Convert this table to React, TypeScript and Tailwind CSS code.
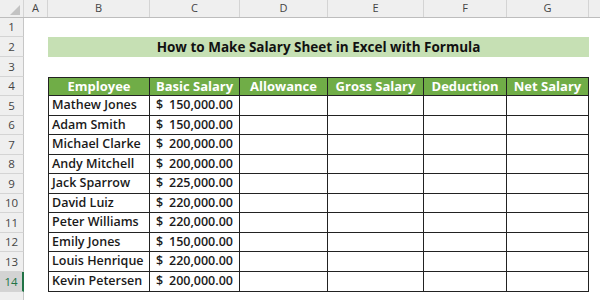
import React from "react";

type Person = {
  name: string;
  salary: string;
};

const people: Array<Person> = [
  { name: "Mathew Jones", salary: "150,000.00" },
  { name: "Adam Smith", salary: "150,000.00" },
  { name: "Michael Clarke", salary: "200,000.00" },
  { name: "Andy Mitchell", salary: "200,000.00" },
  { name: "Jack Sparrow", salary: "225,000.00" },
  { name: "David Luiz", salary: "220,000.00" },
  { name: "Peter Williams", salary: "220,000.00" },
  { name: "Emily Jones", salary: "150,000.00" },
  { name: "Louis Henrique", salary: "220,000.00" },
  { name: "Kevin Petersen", salary: "200,000.00" },
];

const headers = ["Employee", "Basic Salary", "Allowance", "Gross Salary", "Deduction", "Net Salary"];
const widths = ["w-[102px]", "w-[90px]", "w-[88px]", "w-[96px]", "w-[83px]", "w-[82px]"];

// row heights for rows 1..15
const heights = [
  "h-[19px]", "h-[20px]", "h-[20px]", "h-[19px]", "h-[20px]",
  "h-[19px]", "h-[20px]", "h-[19px]", "h-[20px]", "h-[19px]",
  "h-[20px]", "h-[19px]", "h-[20px]", "h-[20px]", "h-[20px]",
];

const RowHeader: React.FC<{ n: number; height: string }> = ({ n, height }) => {
  const active = n === 14;
  return (
    <div
      className={
        "flex w-[24px] shrink-0 items-center justify-center border-b border-[#d4d4d4] text-[11.5px] " +
        height +
        (active
          ? " border-r-2 border-r-[#217346] bg-[#d3d3d3] text-[#217346]"
          : " border-r border-r-[#c6c6c6] bg-[#efefef] text-[#444]")
      }
    >
      {n < 15 ? n : ""}
    </div>
  );
};

const App: React.FC = () => {
  return (
    <div className="h-[300px] w-[600px] overflow-hidden bg-white font-['Open_Sans',sans-serif] text-[12.5px] text-[#1a1a1a]">
      {/* column headers */}
      <div className="flex h-[18px] border-b border-[#bdbdbd] bg-[#efefef] text-[11px] text-[#444]">
        <div className="relative w-[24px] shrink-0 border-r border-[#d4d4d4]">
          <svg className="absolute bottom-[2px] right-[3px]" width="10" height="10" viewBox="0 0 10 10">
            <polygon points="10,0 10,10 0,10" fill="#c3c3c3" />
          </svg>
        </div>
        <div className="flex w-[24px] shrink-0 items-center justify-center border-r border-[#d4d4d4]">A</div>
        {["B", "C", "D", "E", "F", "G"].map((c, i) => (
          <div key={c} className={"flex shrink-0 items-center justify-center border-r border-[#d4d4d4] " + widths[i]}>
            {c}
          </div>
        ))}
        <div className="flex-1" />
      </div>

      {heights.map((h, i) => {
        const n = i + 1;
        const tableRow = n >= 4 && n <= 14;
        return (
          <div key={n} className="flex">
            <RowHeader n={n} height={h} />
            <div className="w-[24px] shrink-0" />
            {n === 2 && (
              <div className={"flex w-[541px] items-center justify-center bg-[#c6e0b4] text-[13.5px] font-bold text-[#111] " + h}>
                How to Make Salary Sheet in Excel with Formula
              </div>
            )}
            {tableRow && n === 4 &&
              headers.map((t, j) => (
                <div
                  key={t}
                  className={
                    "flex shrink-0 items-center justify-center border-y border-r border-[#222] bg-[#70ad47] text-[13px] font-bold text-white " +
                    (j === 0 ? "border-l " : "") +
                    widths[j] +
                    " " +
                    h
                  }
                >
                  {t}
                </div>
              ))}
            {tableRow && n > 4 &&
              (() => {
                const p = people[n - 5];
                return (
                  <>
                    <div className={"flex w-[102px] shrink-0 items-center border-x border-b border-[#222] pl-[3px] font-semibold " + h}>
                      {p.name}
                    </div>
                    <div className={"flex w-[90px] shrink-0 items-center justify-between border-r border-b border-[#222] pr-[6px] pl-[6px] font-semibold " + h}>
                      <span>$</span>
                      <span>{p.salary}</span>
                    </div>
                    {[2, 3, 4, 5].map((j) => (
                      <div key={j} className={"shrink-0 border-r border-b border-[#222] " + widths[j] + " " + h} />
                    ))}
                  </>
                );
              })()}
          </div>
        );
      })}
    </div>
  );
};

export default App;
